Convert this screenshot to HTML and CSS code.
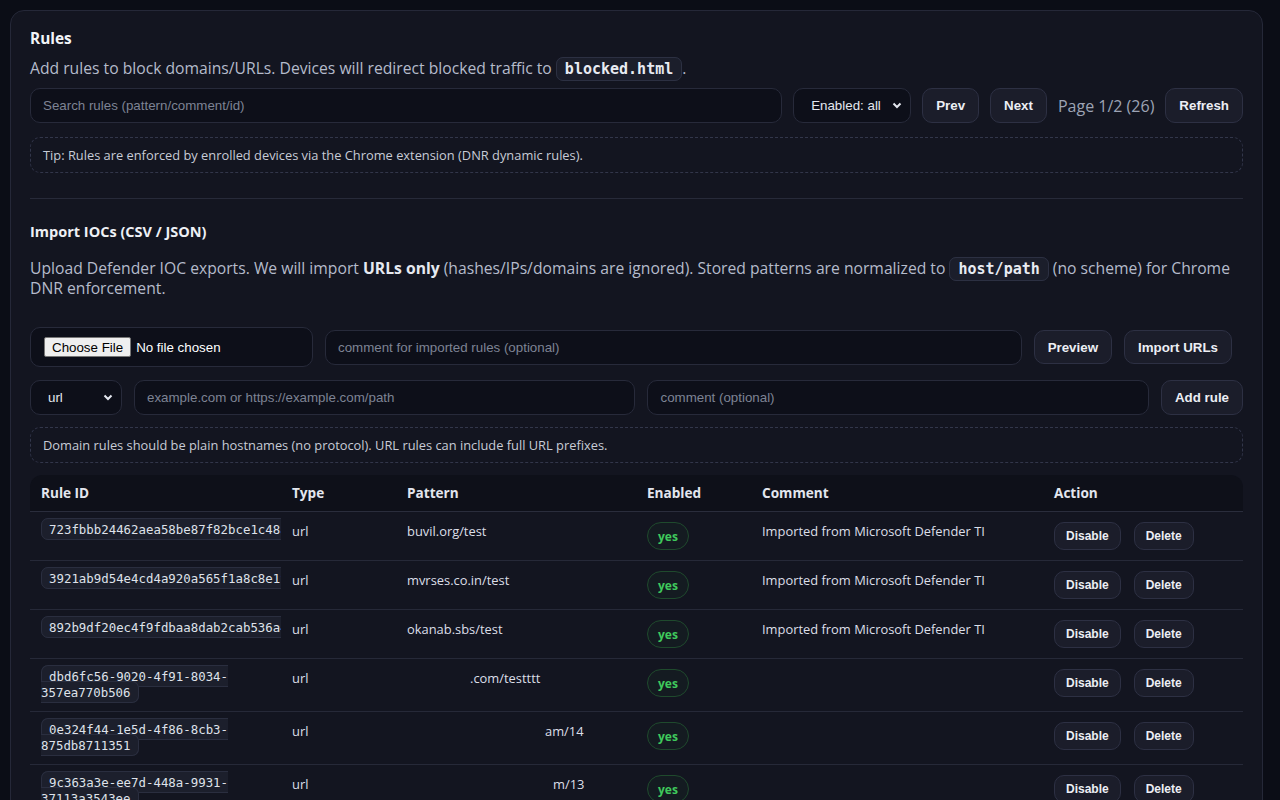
FILE: index.html
```html
<!DOCTYPE html>
<html lang="en">
<head>
  <meta charset="UTF-8">
  <meta name="viewport" content="width=device-width, initial-scale=1.0">
  <title>Rules</title>
  <link rel="stylesheet" href="styles.css">
</head>
<body>
  <div class="page">
    <section class="card">
      <!-- Rules -->
      <h2 class="title">Rules</h2>
      <p class="lead">Add rules to block domains/URLs. Devices will redirect blocked traffic to <code>blocked.html</code>.</p>

      <div class="toolbar">
        <input class="input search" type="text" placeholder="Search rules (pattern/comment/id)">
        <div class="select-wrap enabled">
          <select class="select"><option>Enabled: all</option></select>
          <svg class="chevron" width="10" height="7" viewBox="0 0 10 7"><path d="M1.5 1.5l3.5 3.5 3.5-3.5" fill="none" stroke="currentColor" stroke-width="2"/></svg>
        </div>
        <button class="btn">Prev</button>
        <button class="btn">Next</button>
        <span class="pager">Page 1/2 (26)</span>
        <button class="btn">Refresh</button>
      </div>

      <div class="hint">Tip: Rules are enforced by enrolled devices via the Chrome extension (DNR dynamic rules).</div>

      <hr class="divider">

      <!-- Import -->
      <h3 class="subtitle">Import IOCs (CSV / JSON)</h3>
      <p class="lead">Upload Defender IOC exports. We will import <b>URLs only</b> (hashes/IPs/domains are ignored). Stored patterns are normalized to <code>host/path</code> (no scheme) for Chrome DNR enforcement.</p>

      <div class="row import-row">
        <input class="file" type="file">
        <input class="input grow" type="text" placeholder="comment for imported rules (optional)">
        <button class="btn">Preview</button>
        <button class="btn">Import URLs</button>
      </div>

      <div class="row">
        <div class="select-wrap kind">
          <select class="select"><option>url</option><option>domain</option></select>
          <svg class="chevron" width="10" height="7" viewBox="0 0 10 7"><path d="M1.5 1.5l3.5 3.5 3.5-3.5" fill="none" stroke="currentColor" stroke-width="2"/></svg>
        </div>
        <input class="input grow" type="text" placeholder="example.com or https://example.com/path">
        <input class="input grow" type="text" placeholder="comment (optional)">
        <button class="btn">Add rule</button>
      </div>

      <div class="hint">Domain rules should be plain hostnames (no protocol). URL rules can include full URL prefixes.</div>

      <table class="rules">
        <colgroup>
          <col style="width:251px">
          <col style="width:115px">
          <col style="width:240px">
          <col style="width:115px">
          <col style="width:292px">
          <col style="width:200px">
        </colgroup>
        <thead>
          <tr>
            <th>Rule ID</th>
            <th>Type</th>
            <th>Pattern</th>
            <th>Enabled</th>
            <th>Comment</th>
            <th>Action</th>
          </tr>
        </thead>
        <tbody>
          <tr>
            <td class="id"><code>723fbbb24462aea58be87f82bce1c48a</code></td>
            <td>url</td>
            <td>buvil.org/test</td>
            <td><span class="badge">yes</span></td>
            <td>Imported from Microsoft Defender TI</td>
            <td class="actions"><button class="btn sm">Disable</button><button class="btn sm">Delete</button></td>
          </tr>
          <tr>
            <td class="id"><code>3921ab9d54e4cd4a920a565f1a8c8e1f</code></td>
            <td>url</td>
            <td>mvrses.co.in/test</td>
            <td><span class="badge">yes</span></td>
            <td>Imported from Microsoft Defender TI</td>
            <td class="actions"><button class="btn sm">Disable</button><button class="btn sm">Delete</button></td>
          </tr>
          <tr>
            <td class="id"><code>892b9df20ec4f9fdbaa8dab2cab536a4</code></td>
            <td>url</td>
            <td>okanab.sbs/test</td>
            <td><span class="badge">yes</span></td>
            <td>Imported from Microsoft Defender TI</td>
            <td class="actions"><button class="btn sm">Disable</button><button class="btn sm">Delete</button></td>
          </tr>
          <tr>
            <td class="id"><code>dbd6fc56-9020-4f91-8034-357ea770b506</code></td>
            <td>url</td>
            <td><span class="redacted" style="width:63px"></span>.com/testttt</td>
            <td><span class="badge">yes</span></td>
            <td></td>
            <td class="actions"><button class="btn sm">Disable</button><button class="btn sm">Delete</button></td>
          </tr>
          <tr>
            <td class="id"><code>0e324f44-1e5d-4f86-8cb3-875db8711351</code></td>
            <td>url</td>
            <td><span class="redacted" style="width:138px"></span>am/14</td>
            <td><span class="badge">yes</span></td>
            <td></td>
            <td class="actions"><button class="btn sm">Disable</button><button class="btn sm">Delete</button></td>
          </tr>
          <tr>
            <td class="id"><code>9c363a3e-ee7d-448a-9931-37113a3543ee</code></td>
            <td>url</td>
            <td><span class="redacted" style="width:146px"></span>m/13</td>
            <td><span class="badge">yes</span></td>
            <td></td>
            <td class="actions"><button class="btn sm">Disable</button><button class="btn sm">Delete</button></td>
          </tr>
          <tr>
            <td class="id"><code>4a1d7e02-6b3c-4f9e-a2d1-0c5e8b7f3a19</code></td>
            <td>url</td>
            <td><span class="redacted" style="width:146px"></span>m/12</td>
            <td><span class="badge">yes</span></td>
            <td></td>
            <td class="actions"><button class="btn sm">Disable</button><button class="btn sm">Delete</button></td>
          </tr>
        </tbody>
      </table>
    </section>
  </div>
</body>
</html>
```

FILE: styles.css
```css
* {
  box-sizing: border-box;
}

body {
  margin: 0;
  background-color: #0b0d16;
  color: #e4e7ef;
  font-family: "Open Sans", "Noto Sans", sans-serif;
  font-size: 15px;
}

.page {
  padding: 10px 17px 10px 10px;
}

.card {
  background-color: #131520;
  border: 1px solid #252838;
  border-radius: 14px;
  padding: 17px 19px 20px;
}

.title {
  margin: 0;
  font-size: 15.4px;
  font-weight: 700;
  line-height: 22px;
  color: #f2f4f8;
}

.subtitle {
  margin: 0;
  font-size: 14.5px;
  font-weight: 700;
  line-height: 20px;
  color: #eef0f5;
}

.lead {
  margin: 8px 0 0;
  font-size: 15.7px;
  line-height: 20px;
  color: #b5bbcb;
}

.lead b {
  color: #e6e9f0;
}

.subtitle + .lead {
  margin-top: 16px;
}

code {
  font-family: "DejaVu Sans Mono", monospace;
}

.lead code {
  padding: 2px 8px;
  font-size: 15px;
  font-weight: 700;
  line-height: 1;
  color: #e8ebf2;
  background-color: #1b1e2b;
  border: 1px solid #2c3042;
  border-radius: 7px;
}

/* controls keep the browser's own Arial-like font */
.input,
.select,
.btn,
.file {
  font-family: "Liberation Sans", Arial, sans-serif;
  font-size: 13.33px;
}

.toolbar,
.row {
  display: flex;
  align-items: center;
  gap: 12px;
}

.toolbar {
  margin-top: 10px;
  gap: 11px;
}

.input {
  height: 35px;
  padding: 0 12px;
  color: #e4e7ef;
  background-color: #0d0f19;
  border: 1px solid #272a3a;
  border-radius: 10px;
  outline: none;
}

.input::placeholder {
  color: #7d8394;
}

.search {
  flex: 1;
}

.grow {
  flex: 1;
  min-width: 0;
}

.select-wrap {
  position: relative;
  flex: none;
}

.select {
  appearance: none;
  height: 35px;
  padding: 0 28px 0 17px;
  color: #e4e7ef;
  background-color: #0d0f19;
  border: 1px solid #272a3a;
  border-radius: 10px;
  outline: none;
}

.enabled .select {
  width: 118px;
}

.kind .select {
  width: 92px;
}

.chevron {
  position: absolute;
  right: 9px;
  top: 14px;
  color: #e4e7ef;
  pointer-events: none;
}

.btn {
  flex: none;
  height: 35px;
  padding: 0 13px;
  font-weight: 700;
  color: #eceef4;
  background-color: #1b1d2a;
  border: 1px solid #2d3043;
  border-radius: 10px;
  cursor: pointer;
}

.btn.sm {
  height: 28px;
  padding: 0 11px;
  font-size: 12px;
}

.pager {
  color: #9da3b4;
  font-size: 16px;
}

.hint {
  margin-top: 14px;
  padding: 9px 12px;
  font-size: 12.85px;
  line-height: 16px;
  color: #c7cbd6;
  border: 1px dashed #32364a;
  border-radius: 10px;
}

.divider {
  margin: 25px 0 23px;
  border: 0;
  border-top: 1px solid #272a39;
}

.import-row {
  margin-top: 29px;
  padding-right: 11px;
}

.import-row .btn {
  height: 34px;
}

.row + .row {
  margin-top: 13px;
}

.file {
  flex: none;
  width: 283px;
  height: 40px;
  padding: 9px 13px;
  color: #ffffff;
  background-color: #0d0f19;
  border: 1px solid #272a3a;
  border-radius: 10px;
}

.file::file-selector-button {
  height: 20px;
  margin-right: 5px;
  padding: 0 7px;
  font-family: "Liberation Sans", Arial, sans-serif;
  font-size: 13.33px;
  color: #000000;
  background-color: #efefef;
  border: 1px solid #767676;
  border-radius: 2px;
}

.row + .hint {
  margin-top: 12px;
}

/* table */
.rules {
  width: 100%;
  margin-top: 12px;
  border-collapse: separate;
  border-spacing: 0;
  table-layout: fixed;
  font-size: 12.9px;
}

.rules th {
  padding: 10px 10px 10px 11px;
  text-align: left;
  font-size: 13.6px;
  font-weight: 700;
  line-height: 16px;
  color: #e3e6ee;
  background-color: #0e1019;
  border-bottom: 1px solid #2a2d3c;
}

.rules th:first-child {
  border-top-left-radius: 12px;
}

.rules th:last-child {
  border-top-right-radius: 12px;
}

.rules td {
  padding: 10px 10px 10px 11px;
  vertical-align: top;
  line-height: 19px;
  color: #dcdfe8;
  border-bottom: 1px solid #262938;
}

.rules td.id {
  overflow: hidden;
  line-height: 16px;
}

.rules td.id code {
  vertical-align: top;
  padding: 3px 7px 2px;
  font-size: 12.4px;
  line-height: 16px;
  color: #dfe2ea;
  background-color: #1c1f2c;
  border: 1px solid #2a2e3f;
  border-radius: 7px;
}

.redacted {
  display: inline-block;
}

.badge {
  display: inline-block;
  height: 28px;
  padding: 0 10px;
  font-size: 12px;
  font-weight: 700;
  line-height: 28px;
  color: #3fc95c;
  background-color: rgba(40, 180, 80, 0.04);
  border: 1px solid #1f4a2d;
  border-radius: 999px;
}

.actions .btn + .btn {
  margin-left: 13px;
}
```
